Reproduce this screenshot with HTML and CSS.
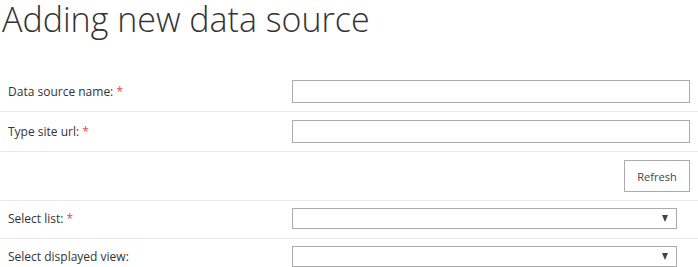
FILE: index.html
```html
<!DOCTYPE html>
<html>
<head>
<meta charset="utf-8">
<link rel="stylesheet" href="styles.css">
</head>
<body>
<h1 class="title">Adding new data source</h1>
<form class="form">
  <div class="row">
    <label class="label">Data source name: <span class="req">*</span></label>
    <div class="field"><input class="input" type="text"></div>
  </div>
  <div class="row">
    <label class="label">Type site url: <span class="req">*</span></label>
    <div class="field"><input class="input" type="text"></div>
  </div>
  <div class="row">
    <div class="label"></div>
    <div class="field field-right"><button class="btn" type="button">Refresh</button></div>
  </div>
  <div class="row row-select">
    <label class="label">Select list: <span class="req">*</span></label>
    <div class="field"><div class="select"><span class="arrow"></span></div></div>
  </div>
  <div class="row row-select row-last">
    <label class="label">Select displayed view:</label>
    <div class="field"><div class="select"><span class="arrow"></span></div></div>
  </div>
</form>
</body>
</html>
```
FILE: styles.css
```css
html, body {
  margin: 0;
  padding: 0;
  background: #fff;
}
body {
  font-family: "Open Sans", "Noto Sans", sans-serif;
  color: #333;
  overflow: hidden;
}
.title {
  margin: 0;
  padding: 0 0 0 2px;
  font-family: "Open Sans", sans-serif;
  font-weight: 300;
  font-size: 34px;
  line-height: 38px;
  color: #333;
  height: 72px;
  white-space: nowrap;
}
.form {
  margin: 0;
}
.row {
  display: grid;
  grid-template-columns: 284px 1fr;
  align-items: center;
  padding: 8px 8px;
  border-bottom: 1px solid #eaeaea;
}
.row-select {
  padding-top: 7px;
  padding-bottom: 9px;
}
.row-last {
  border-bottom: none;
}
.label {
  font-size: 12px;
  color: #333;
}
.req {
  color: #e5484d;
}
.field-right {
  display: flex;
  justify-content: flex-end;
}
.input {
  display: block;
  box-sizing: border-box;
  width: 100%;
  height: 23px;
  margin: 0;
  border: 1px solid #ababab;
  padding: 0 6px;
  font: inherit;
}
.btn {
  box-sizing: border-box;
  width: 66px;
  height: 32px;
  border: 1px solid #ababab;
  background: #fff;
  font-family: "Open Sans", sans-serif;
  font-size: 11px;
  color: #444;
  padding: 0;
}
.select {
  box-sizing: border-box;
  height: 21px;
  margin-right: 13px;
  border: 1px solid #ababab;
  display: flex;
  align-items: center;
  justify-content: flex-end;
  padding-right: 8px;
}
.arrow {
  width: 0;
  height: 0;
  border-left: 3.5px solid transparent;
  border-right: 3.5px solid transparent;
  border-top: 7px solid #444;
}
```
